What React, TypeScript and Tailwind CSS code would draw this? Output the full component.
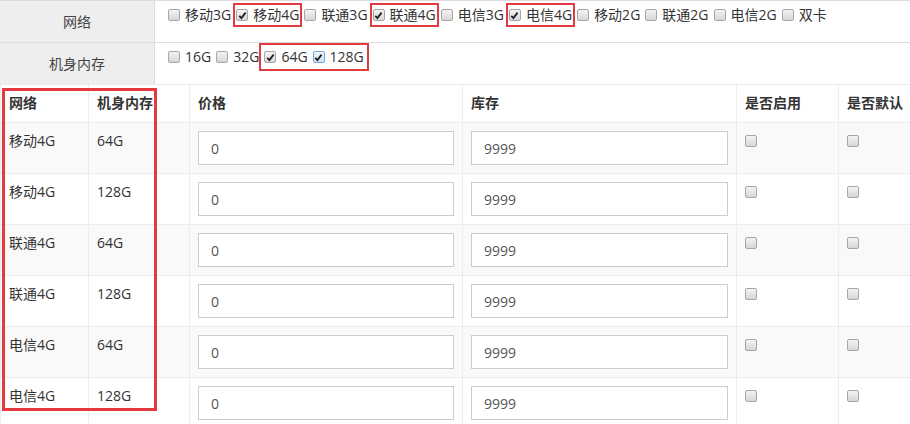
import type { ReactNode } from "react"

const networks = ["移动3G", "移动4G", "联通3G", "联通4G", "电信3G", "电信4G", "移动2G", "联通2G", "电信2G", "双卡"]
const checkedNet = ["移动4G", "联通4G", "电信4G"]
const memories = ["16G", "32G", "64G", "128G"]

const rows = [
  { net: "移动4G", mem: "64G" },
  { net: "移动4G", mem: "128G" },
  { net: "联通4G", mem: "64G" },
  { net: "联通4G", mem: "128G" },
  { net: "电信4G", mem: "64G" },
  { net: "电信4G", mem: "128G" },
]

function Box({ checked = false, focus = false }: { checked?: boolean; focus?: boolean }) {
  return (
    <span
      className={`flex w-[12px] h-[12px] shrink-0 items-center justify-center rounded-[2px] border ${
        focus
          ? "border-[#7aa7d8] bg-gradient-to-b from-[#eef5fc] to-[#cfe0f3]"
          : "border-[#a6a6a6] bg-gradient-to-b from-[#f4f4f4] to-[#d6d6d6]"
      }`}
    >
      {checked && (
        <svg width="9" height="9" viewBox="0 0 9 9">
          <path d="M1.3 4.8 L3.4 7 L7.6 1.6" fill="none" stroke="#1f1f1f" strokeWidth="1.8" />
        </svg>
      )}
    </span>
  )
}

function Item({ label, checked, focus }: { label: string; checked?: boolean; focus?: boolean }) {
  return (
    <span className="inline-flex items-center h-[18px]">
      <Box checked={checked} focus={focus} />
      <span className="ml-[5px]">{label}</span>
    </span>
  )
}

function Mark({ children, className = "" }: { children: ReactNode; className?: string }) {
  return <span className={`inline-flex items-center gap-[5px] outline-2 outline-[#e23a3f] ${className}`}>{children}</span>
}

export default function App() {
  return (
    <div className="relative w-[910px] h-[424px] overflow-hidden bg-white text-[14px] leading-5 text-[#333] font-['Open_Sans','Noto_Sans_CJK_SC',sans-serif]">
      {/* spec filter */}
      <div className="border-t border-[#dcdcdc]">
        <div className="flex h-[42px] border-b border-[#dcdcdc]">
          <div className="w-[155px] shrink-0 bg-[#eeeeee] border-r border-[#dcdcdc] flex items-center justify-center text-[#444]">
            网络
          </div>
          <div className="flex items-start gap-[5px] pl-[13px] pt-[5px]">
            {networks.map((n) =>
              checkedNet.includes(n) ? (
                <Mark key={n} className="outline-offset-[1px]">
                  <Item label={n} checked />
                </Mark>
              ) : (
                <Item key={n} label={n} />
              ),
            )}
          </div>
        </div>
        <div className="flex h-[41px]">
          <div className="w-[155px] shrink-0 bg-[#eeeeee] border-r border-[#dcdcdc] flex items-center justify-center text-[#444]">
            机身内存
          </div>
          <div className="flex items-start gap-[5px] pl-[13px] pt-[5px]">
            <Item label={memories[0]} />
            <Item label={memories[1]} />
            <Mark className="outline-offset-[3px]">
              <Item label={memories[2]} checked />
              <Item label={memories[3]} checked focus />
            </Mark>
          </div>
        </div>
      </div>

      {/* sku table */}
      <table className="w-[910px] table-fixed border-collapse">
        <colgroup>
          <col className="w-[88px]" />
          <col className="w-[101px]" />
          <col className="w-[273px]" />
          <col className="w-[274px]" />
          <col className="w-[102px]" />
          <col className="w-[72px]" />
        </colgroup>
        <thead>
          <tr className="h-[38px] border-t border-b border-[#ececec]">
            {["网络", "机身内存", "价格", "库存", "是否启用", "是否默认"].map((h) => (
              <th key={h} className="px-2 py-2 text-left font-bold align-top border-x border-[#ececec] whitespace-nowrap">
                {h}
              </th>
            ))}
          </tr>
        </thead>
        <tbody>
          {rows.map((r, i) => (
            <tr key={i} className={`h-[51px] border-t border-[#ececec] ${i % 2 === 0 ? "bg-[#f9f9f9]" : "bg-white"}`}>
              <td className="px-2 py-2 align-top border-x border-[#ececec]">{r.net}</td>
              <td className="px-2 py-2 align-top border-x border-[#ececec]">{r.mem}</td>
              <td className="px-2 py-2 align-top border-x border-[#ececec]">
                <input
                  readOnly
                  value="0"
                  className="block w-full h-[34px] border border-[#cccccc] bg-white px-3 text-[#555] outline-none"
                />
              </td>
              <td className="px-2 py-2 align-top border-x border-[#ececec]">
                <input
                  readOnly
                  value="9999"
                  className="block w-full h-[34px] border border-[#cccccc] bg-white px-3 text-[#555] outline-none"
                />
              </td>
              <td className="px-2 py-2 align-top border-x border-[#ececec]">
                <div className="pt-[4px]">
                  <Box />
                </div>
              </td>
              <td className="px-2 py-2 align-top border-x border-[#ececec]">
                <div className="pt-[4px]">
                  <Box />
                </div>
              </td>
            </tr>
          ))}
        </tbody>
      </table>

      {/* annotation frame over the first two columns */}
      <div className="pointer-events-none absolute left-[2px] top-[88px] w-[155px] h-[323px] border-[3px] border-[#e23a3f]" />
    </div>
  )
}
